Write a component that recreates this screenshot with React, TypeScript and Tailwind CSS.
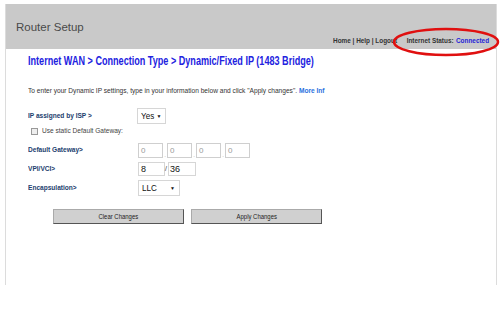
import React from "react";

const sans = { fontFamily: "'Liberation Sans', Arial, sans-serif" };

function Select({ value, w }: { value: string; w: string }) {
  return (
    <div className={`flex items-center justify-between ${w} h-[16px] border border-[#d6d6d6] bg-white pl-[3px] pr-[4px] text-[9.5px] leading-[14px] font-normal text-[#111]`}>
      <span className="block origin-left scale-x-[0.85]">{value}</span>
      <span className="text-[5px]">▼</span>
    </div>
  );
}

function Box({ v }: { v: string }) {
  return (
    <div className="w-[25px] h-[15px] border border-[#cfcfcf] bg-white pl-[2px] text-[8px] leading-[13px] text-[#999]">{v}</div>
  );
}

function Dot() {
  return <span className="w-[4px] text-center text-[#999] text-[6px] leading-[6px] self-end">.</span>;
}

function Lbl({ children }: { children: React.ReactNode }) {
  return (
    <span className="w-[110px]">
      <span className="block w-max origin-left scale-x-[0.82] whitespace-nowrap">{children}</span>
    </span>
  );
}

export default function App() {
  return (
    <div className="w-[500px] h-[315px] bg-white relative overflow-hidden" style={sans}>
      <div className="ml-[5px] mr-[3px] mt-[4px] h-[281px] border-l border-r border-[#dcdcdc] flex flex-col">
        <div className="h-[45px] bg-[#c9c9c9] flex justify-between">
          <div className="pl-[10px] pt-[16px] text-[11.5px] leading-[14px] text-[#4a4a4a]">Router Setup</div>
          <div className="flex items-end pb-[3px] pr-[7px]">
            <div className="origin-right scale-x-[0.8] whitespace-nowrap text-[8px] leading-[10px] font-bold text-[#333]">
              <span>Home | Help | Logout</span>
              <span className="ml-[12px]">Internet Status:</span>
              <span className="ml-[3px] text-[#2424d8]">Connected</span>
            </div>
          </div>
        </div>
        <div className="pl-[22px] pt-[5px]">
          <div className="h-[14px] w-max origin-left scale-x-[0.757] whitespace-nowrap text-[12px] leading-[14px] font-bold text-[#2222e0]">
            Internet WAN &gt; Connection Type &gt; Dynamic/Fixed IP (1483 Bridge)
          </div>
          <div className="mt-[18px] h-[10px] w-max origin-left scale-x-[0.88] whitespace-nowrap text-[7.5px] leading-[10px] text-[#333]">
            To enter your Dynamic IP settings, type in your information below and click "Apply changes". <span className="font-bold text-[#2a6fe0]">More Inf</span>
          </div>
          <div className="mt-[11px] flex flex-col text-[8px] leading-[10px] font-bold text-[#22406e]">
            <div className="flex items-center h-[17px]">
              <span className="w-[109px]">
                <span className="block w-max origin-left scale-x-[0.82] whitespace-nowrap">IP assigned by ISP &gt;</span>
              </span>
              <Select value="Yes" w="w-[29px]" />
            </div>
            <div className="flex items-center h-[12px] mt-[1px] font-normal text-[#444]">
              <span className="w-[7px] h-[7px] border border-[#999] bg-[#eee] ml-[3px] mr-[4px]" />
              <span className="block w-max origin-left scale-x-[0.82] whitespace-nowrap">Use static Default Gateway:</span>
            </div>
            <div className="flex items-center h-[18px] mt-[4px]">
              <Lbl>Default Gateway&gt;</Lbl>
              <div className="flex font-normal">
                <Box v="0" /><Dot />
                <Box v="0" /><Dot />
                <Box v="0" /><Dot />
                <Box v="0" />
              </div>
            </div>
            <div className="flex items-center h-[16px] mt-[2px]">
              <Lbl>VPI/VCI&gt;</Lbl>
              <div className="flex items-center font-normal text-[#111]">
                <div className="w-[27px] h-[14px] border border-[#d6d6d6] pl-[2px] text-[9px] leading-[12px]">8</div>
                <span className="w-[3px] text-[7px] text-[#333]">/</span>
                <div className="w-[28px] h-[14px] border border-[#d6d6d6] pl-[1px] text-[9px] leading-[12px]">36</div>
              </div>
            </div>
            <div className="flex items-center h-[17px] mt-[2px]">
              <Lbl>Encapsulation&gt;</Lbl>
              <Select value="LLC" w="w-[42px]" />
            </div>
          </div>
          <div className="mt-[13px] ml-[25px] flex gap-[7px] text-[7px] leading-[9px] text-[#222]">
            <div className="w-[131px] h-[15px] bg-[#d0d0d0] border border-[#aaa] border-r-[#555] border-b-[#555] flex items-center justify-center">
              <span className="block scale-x-[0.85]">Clear Changes</span>
            </div>
            <div className="w-[131px] h-[15px] bg-[#d0d0d0] border border-[#aaa] border-r-[#555] border-b-[#555] flex items-center justify-center">
              <span className="block scale-x-[0.85]">Apply Changes</span>
            </div>
          </div>
        </div>
      </div>
      <svg className="absolute left-[392px] top-[27px]" width="108" height="30" viewBox="0 0 108 30">
        <ellipse cx="54" cy="15" rx="52" ry="13" fill="none" stroke="#e01010" strokeWidth="2.5" />
      </svg>
    </div>
  );
}
